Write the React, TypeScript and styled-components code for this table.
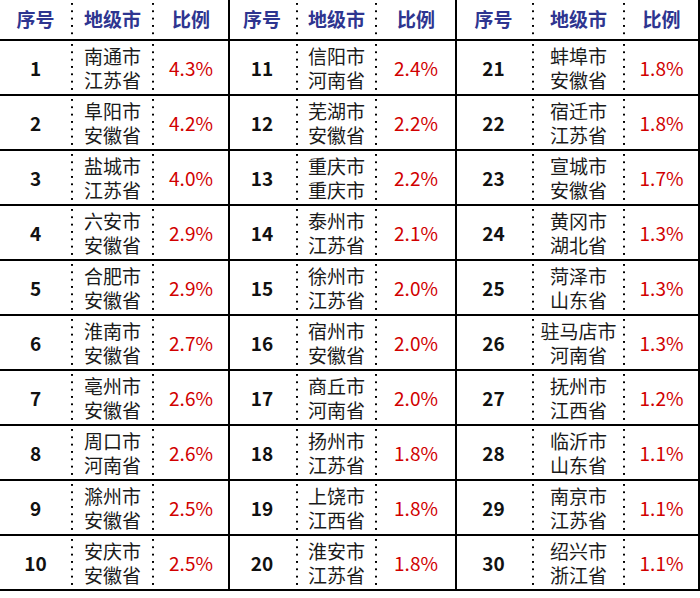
import React from "react";
import styled, { createGlobalStyle } from "styled-components";

const GlobalStyle = createGlobalStyle`
  html, body { margin: 0; padding: 0; background: #ffffff; }
  body { font-family: "Noto Sans CJK SC", "Noto Sans", sans-serif; }
`;

type Row = { rank: number; city: string; prov: string; pct: string };

const data: Row[] = [
  { rank: 1, city: "南通市", prov: "江苏省", pct: "4.3%" },
  { rank: 2, city: "阜阳市", prov: "安徽省", pct: "4.2%" },
  { rank: 3, city: "盐城市", prov: "江苏省", pct: "4.0%" },
  { rank: 4, city: "六安市", prov: "安徽省", pct: "2.9%" },
  { rank: 5, city: "合肥市", prov: "安徽省", pct: "2.9%" },
  { rank: 6, city: "淮南市", prov: "安徽省", pct: "2.7%" },
  { rank: 7, city: "亳州市", prov: "安徽省", pct: "2.6%" },
  { rank: 8, city: "周口市", prov: "河南省", pct: "2.6%" },
  { rank: 9, city: "滁州市", prov: "安徽省", pct: "2.5%" },
  { rank: 10, city: "安庆市", prov: "安徽省", pct: "2.5%" },
  { rank: 11, city: "信阳市", prov: "河南省", pct: "2.4%" },
  { rank: 12, city: "芜湖市", prov: "安徽省", pct: "2.2%" },
  { rank: 13, city: "重庆市", prov: "重庆市", pct: "2.2%" },
  { rank: 14, city: "泰州市", prov: "江苏省", pct: "2.1%" },
  { rank: 15, city: "徐州市", prov: "江苏省", pct: "2.0%" },
  { rank: 16, city: "宿州市", prov: "安徽省", pct: "2.0%" },
  { rank: 17, city: "商丘市", prov: "河南省", pct: "2.0%" },
  { rank: 18, city: "扬州市", prov: "江苏省", pct: "1.8%" },
  { rank: 19, city: "上饶市", prov: "江西省", pct: "1.8%" },
  { rank: 20, city: "淮安市", prov: "江苏省", pct: "1.8%" },
  { rank: 21, city: "蚌埠市", prov: "安徽省", pct: "1.8%" },
  { rank: 22, city: "宿迁市", prov: "江苏省", pct: "1.8%" },
  { rank: 23, city: "宣城市", prov: "安徽省", pct: "1.7%" },
  { rank: 24, city: "黄冈市", prov: "湖北省", pct: "1.3%" },
  { rank: 25, city: "菏泽市", prov: "山东省", pct: "1.3%" },
  { rank: 26, city: "驻马店市", prov: "河南省", pct: "1.3%" },
  { rank: 27, city: "抚州市", prov: "江西省", pct: "1.2%" },
  { rank: 28, city: "临沂市", prov: "山东省", pct: "1.1%" },
  { rank: 29, city: "南京市", prov: "江苏省", pct: "1.1%" },
  { rank: 30, city: "绍兴市", prov: "浙江省", pct: "1.1%" },
];

const groups: { cols: string; rows: Row[] }[] = [
  { cols: "71px 83px 74px", rows: data.slice(0, 10) },
  { cols: "68px 81px 78px", rows: data.slice(10, 20) },
  { cols: "77px 93px 73px", rows: data.slice(20, 30) },
];

const Table = styled.div`
  display: flex;
  width: 698px;
`;

const Group = styled.div<{ $cols: string }>`
  display: grid;
  grid-template-columns: ${(p) => p.$cols};
  grid-template-rows: 41px repeat(10, 55px);
  border-right: 2px solid #000;
  box-sizing: content-box;
  &:not(:first-child) {
    margin-left: -2px;
  }
`;

const Cell = styled.div<{ $dotted?: boolean }>`
  box-sizing: border-box;
  display: flex;
  align-items: center;
  justify-content: center;
  text-align: center;
  border-bottom: 2px solid #000;
  ${(p) =>
    p.$dotted
      ? `
    background-image: linear-gradient(to bottom, #000 2px, transparent 2px),
      linear-gradient(to bottom, #000 2px, transparent 2px);
    background-size: 2px 7.35px, 2px 7.35px;
    background-repeat: repeat-y, repeat-y;
    background-position: 0 3px, 100% 3px;
  `
      : ""}
`;

const HeadCell = styled(Cell)`
  font-size: 19px;
  font-weight: 700;
  color: #2e3590;
  padding-bottom: 2px;
`;

const RankCell = styled(Cell)`
  font-size: 19px;
  font-weight: 700;
  color: #111;
`;

const CityCell = styled(Cell)`
  flex-direction: column;
  font-size: 19px;
  color: #1a1a1a;
  padding-top: 1px;
`;

const CityLine = styled.span`
  display: block;
  height: 24px;
  line-height: 24px;
  white-space: nowrap;
`;

const PctCell = styled(Cell)`
  font-size: 19px;
  color: #d10000;
`;

export default function App() {
  return (
    <>
      <GlobalStyle />
      <Table>
        {groups.map((g, gi) => (
          <Group key={gi} $cols={g.cols}>
            <HeadCell>序号</HeadCell>
            <HeadCell $dotted>地级市</HeadCell>
            <HeadCell>比例</HeadCell>
            {g.rows.map((r) => (
              <React.Fragment key={r.rank}>
                <RankCell>{r.rank}</RankCell>
                <CityCell $dotted>
                  <CityLine>{r.city}</CityLine>
                  <CityLine>{r.prov}</CityLine>
                </CityCell>
                <PctCell>{r.pct}</PctCell>
              </React.Fragment>
            ))}
          </Group>
        ))}
      </Table>
    </>
  );
}
